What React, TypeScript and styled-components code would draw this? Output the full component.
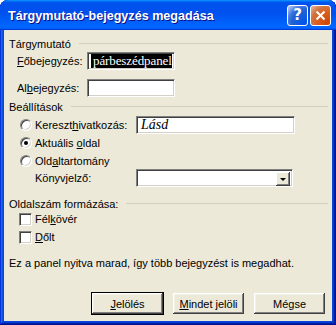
import React from 'react';
import styled, { createGlobalStyle } from 'styled-components';

const Global = createGlobalStyle`
  html, body {
    margin: 0;
    padding: 0;
    background: #fff;
  }
  body {
    font-family: 'Liberation Sans', Arial, sans-serif;
    font-size: 11px;
    color: #000;
  }
`;

const Frame = styled.div`
  width: 336px;
  height: 325px;
  box-sizing: border-box;
  display: flex;
  flex-direction: column;
  padding: 0 4px 4px 4px;
  background: #0846da;
  border-radius: 8px 8px 0 0;
  box-shadow: inset -1px -1px #00138c, inset 1px 1px #0831d9,
    inset -2px -2px #001ea0, inset 2px 2px #166aee, inset -3px -3px #003bda,
    inset 3px 3px #0855dd;
  overflow: hidden;
`;

const TitleBar = styled.div`
  height: 30px;
  margin: 0 -4px;
  flex-shrink: 0;
  display: flex;
  align-items: center;
  padding: 0 5px 0 8px;
  border-radius: 8px 8px 0 0;
  background: linear-gradient(
    180deg,
    #0997ff,
    #0053ee 8%,
    #0050ee 40%,
    #0066ff 88%,
    #0066ff 93%,
    #005bff 95%,
    #003dd7 96%,
    #003dd7
  );
`;

const TitleText = styled.div`
  flex: 1;
  color: #fff;
  font-family: 'Liberation Sans', Arial, sans-serif;
  font-weight: bold;
  font-size: 12.6px;
  text-shadow: 1px 1px #0f1089;
  padding-top: 1px;
`;

const CaptionButton = styled.div<{ $close?: boolean }>`
  width: 21px;
  height: 21px;
  box-sizing: border-box;
  margin-left: 2px;
  border: 1px solid #fff;
  border-radius: 3px;
  display: flex;
  align-items: center;
  justify-content: center;
  color: #fff;
  font-family: 'DejaVu Sans', sans-serif;
  font-weight: bold;
  font-size: 15px;
  background: ${(p) =>
    p.$close
      ? 'radial-gradient(circle at 90% 90%, #cc4600 0%, #dc6527 55%, #cd7546 70%, #e5a47f 90%)'
      : 'radial-gradient(circle at 90% 90%, #0054e9 0%, #2263d5 55%, #4478e0 70%, #a3bbef 90%)'};
`;

const Body = styled.div`
  flex: 1;
  display: flex;
  flex-direction: column;
  background: #ece9d8;
  padding: 7px 4px 6px 5px;
`;

const GroupHead = styled.div<{ $top?: number }>`
  display: flex;
  align-items: center;
  height: 13px;
  margin-top: ${(p) => p.$top || 0}px;
  gap: 8px;
  white-space: nowrap;
  &::after {
    content: '';
    flex: 1;
    height: 1px;
    background: #d0d0bf;
  }
`;

const Row = styled.div<{ $top?: number; $h?: number; $indent?: number }>`
  display: flex;
  align-items: center;
  height: ${(p) => p.$h || 18}px;
  margin-top: ${(p) => p.$top || 0}px;
  padding-left: ${(p) => p.$indent || 0}px;
  white-space: nowrap;
`;

const Label = styled.span<{ $w?: number }>`
  display: inline-block;
  width: ${(p) => (p.$w ? `${p.$w}px` : 'auto')};
  flex-shrink: 0;
`;

const Key = styled.span`
  text-decoration: underline;
`;

const sunken = `
  background: #fff;
  box-sizing: border-box;
  border: 1px solid;
  border-color: #808080 #fff #fff #808080;
  box-shadow: inset 1px 1px #404040, inset -1px -1px #d4d0c8;
`;

const TextBox = styled.div<{ $w: number }>`
  ${sunken}
  width: ${(p) => p.$w}px;
  height: 18px;
  display: flex;
  align-items: center;
  padding: 0 2px;
  overflow: hidden;
`;

const Selected = styled.span`
  flex: 1;
  height: 14px;
  background: #000;
  color: #fff;
  font-family: 'Liberation Serif', 'Times New Roman', serif;
  font-size: 13px;
  line-height: 14px;
  letter-spacing: -0.1px;
  padding-left: 2px;
  border-left: 1px solid #fff;
  white-space: nowrap;
`;

const Ref = styled.span`
  font-family: 'Liberation Serif', 'Times New Roman', serif;
  font-style: italic;
  font-size: 14px;
  padding-left: 2px;
`;

const Radio = styled.span<{ $on?: boolean }>`
  ${sunken}
  width: 12px;
  height: 12px;
  border-radius: 50%;
  margin-right: 3px;
  display: flex;
  align-items: center;
  justify-content: center;
  flex-shrink: 0;
  &::after {
    content: '';
    width: 4px;
    height: 4px;
    border-radius: 50%;
    background: ${(p) => (p.$on ? '#000' : 'transparent')};
  }
`;

const Check = styled.span`
  ${sunken}
  width: 13px;
  height: 13px;
  margin-right: 3px;
  flex-shrink: 0;
`;

const Combo = styled.div`
  ${sunken}
  width: 157px;
  height: 18px;
  display: flex;
  justify-content: flex-end;
  padding: 2px;
`;

const ComboButton = styled.div`
  width: 14px;
  height: 14px;
  box-sizing: border-box;
  background: #ece9d8;
  box-shadow: inset -1px -1px #404040, inset 1px 1px #fff,
    inset -2px -2px #808080;
  display: flex;
  align-items: center;
  justify-content: center;
  &::after {
    content: '';
    border-left: 3px solid transparent;
    border-right: 3px solid transparent;
    border-top: 3px solid #000;
    margin-top: 1px;
  }
`;

const Note = styled.div`
  margin-top: 11px;
  height: 13px;
  line-height: 13px;
  white-space: nowrap;
`;

const ButtonBar = styled.div`
  margin-top: auto;
  display: flex;
  justify-content: flex-end;
  gap: 8px;
  padding-right: 2px;
`;

const Button = styled.div<{ $default?: boolean }>`
  width: 73px;
  height: 23px;
  box-sizing: border-box;
  display: flex;
  align-items: center;
  justify-content: center;
  background: #ece9d8;
  border: 1px solid ${(p) => (p.$default ? '#000' : 'transparent')};
  box-shadow: inset -1px -1px #404040, inset 1px 1px #fff,
    inset -2px -2px #808080, inset 2px 2px #f4f2e8;
`;

function CloseIcon() {
  return (
    <svg width="11" height="11" viewBox="0 0 11 11">
      <path d="M1.5 1.5 L9.5 9.5 M9.5 1.5 L1.5 9.5" stroke="#fff" strokeWidth="2" />
    </svg>
  );
}

export default function App() {
  return (
    <>
      <Global />
      <Frame>
        <TitleBar>
          <TitleText>Tárgymutató-bejegyzés megadása</TitleText>
          <CaptionButton>?</CaptionButton>
          <CaptionButton $close>
            <CloseIcon />
          </CaptionButton>
        </TitleBar>
        <Body>
          <GroupHead>Tárgymutató</GroupHead>
          <Row $top={2} $indent={8}>
            <Label $w={70}>
              <Key>F</Key>őbejegyzés:
            </Label>
            <TextBox $w={88}>
              <Selected>párbeszédpanel</Selected>
            </TextBox>
          </Row>
          <Row $top={9} $indent={8}>
            <Label $w={70}>
              Al<Key>b</Key>ejegyzés:
            </Label>
            <TextBox $w={88} />
          </Row>

          <GroupHead $top={3}>Beállítások</GroupHead>
          <Row $top={3} $indent={11}>
            <Radio />
            <Label $w={101}>
              Kereszt<Key>h</Key>ivatkozás:
            </Label>
            <TextBox $w={159}>
              <Ref>Lásd</Ref>
            </TextBox>
          </Row>
          <Row $indent={11}>
            <Radio $on />
            <Label>
              Aktuális <Key>o</Key>ldal
            </Label>
          </Row>
          <Row $indent={11} $h={17}>
            <Radio />
            <Label>
              Old<Key>a</Key>ltartomány
            </Label>
          </Row>
          <Row $indent={26}>
            <Label $w={101}>Könyvjelző:</Label>
            <Combo>
              <ComboButton />
            </Combo>
          </Row>

          <GroupHead $top={10}>Oldalszám formázása:</GroupHead>
          <Row $indent={10}>
            <Check />
            <Label>
              Fél<Key>k</Key>övér
            </Label>
          </Row>
          <Row $indent={10}>
            <Check />
            <Label>
              <Key>D</Key>őlt
            </Label>
          </Row>

          <Note>Ez a panel nyitva marad, így több bejegyzést is megadhat.</Note>

          <ButtonBar>
            <Button $default>
              <Key>J</Key>elölés
            </Button>
            <Button>
              <Key>M</Key>indet jelöli
            </Button>
            <Button>Mégse</Button>
          </ButtonBar>
        </Body>
      </Frame>
    </>
  );
}
